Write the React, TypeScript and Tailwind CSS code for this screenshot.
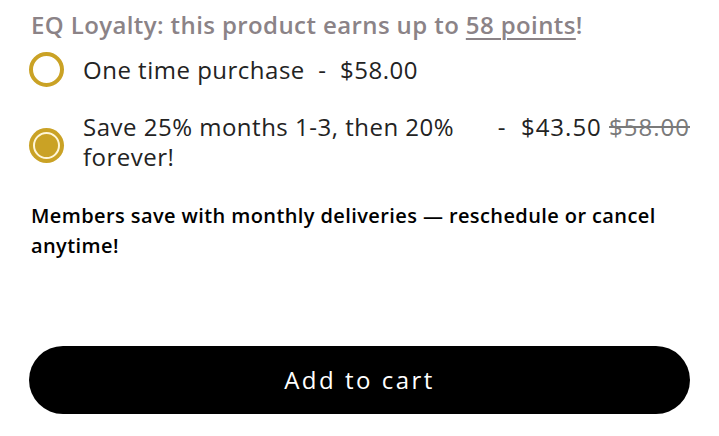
import React from "react";

const Radio = ({ checked }: { checked?: boolean }) =>
  checked ? (
    <div className="w-[35px] h-[35px] shrink-0 rounded-full bg-[#caa225] p-[4px]">
      <div className="w-full h-full rounded-full border-2 border-[#fff6d8] bg-[#caa225]" />
    </div>
  ) : (
    <div className="w-[35px] h-[35px] shrink-0 rounded-full border-[4px] border-[#caa225] bg-white" />
  );

export default function App() {
  return (
    <div
      className="w-[719px] h-[436px] bg-white px-[29px] pt-[10px] flex flex-col text-[#232323]"
      style={{ fontFamily: "'Open Sans', 'Noto Sans', sans-serif" }}
    >
      <p className="text-[24px] leading-[30px] font-semibold text-[#8b8387] pl-[2px] tracking-[0.4px]">
        EQ Loyalty: this product earns up to{" "}
        <span className="underline underline-offset-[4px] decoration-[2px]">58 points</span>!
      </p>

      <div className="mt-[12px] flex items-center gap-[19px]">
        <Radio />
        <span className="text-[24px] leading-[30px] tracking-[0.5px]">
          One time purchase&nbsp;&nbsp;-&nbsp;&nbsp;$58.00
        </span>
      </div>

      <div className="mt-[25px] flex items-start gap-[19px] text-[24px] leading-[30px] tracking-[0.5px]">
        <div className="mt-[16px]">
          <Radio checked />
        </div>
        <span className="w-[396px]">Save 25% months 1-3, then 20% forever!</span>
        <span className="ml-auto whitespace-nowrap tracking-[1px]">
          -&nbsp;&nbsp;$43.50{" "}
          <span className="line-through text-[#7a7a7a] decoration-[2px]">$58.00</span>
        </span>
      </div>

      <p className="mt-[29px] pl-[2px] text-[20px] leading-[30px] font-semibold text-black tracking-[0.4px]">
        Members save with monthly deliveries — reschedule or cancel anytime!
      </p>

      <button className="mt-auto mb-[22px] h-[68px] w-full rounded-full bg-black text-white text-[24px] tracking-[2.5px]">
        Add to cart
      </button>
    </div>
  );
}
